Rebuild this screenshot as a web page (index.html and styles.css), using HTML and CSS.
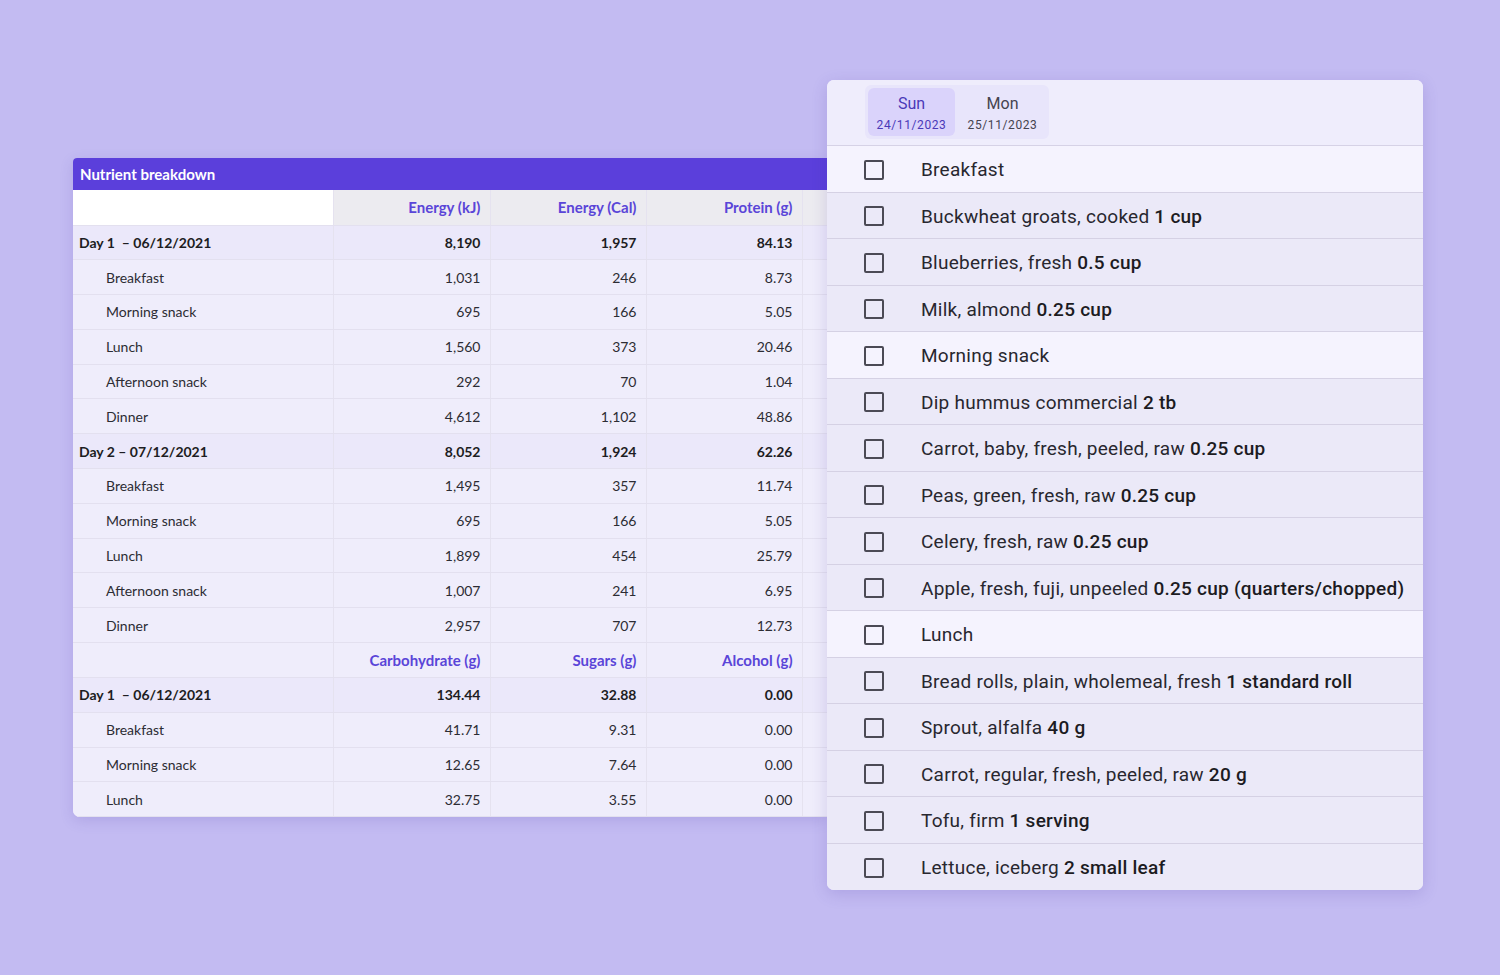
FILE: index.html
```html
<!DOCTYPE html>
<html lang="en">
<head>
    <meta charset="UTF-8">
    <meta name="viewport" content="width=device-width, initial-scale=1.0">
    <title>Nutrient breakdown</title>
    <link rel="stylesheet" href="styles.css">
</head>
<body>
    <div class="stage">
        <!-- nutrient table -->
        <div class="report">
            <div class="report-title">Nutrient breakdown</div>
            <table class="nutrients">
                <tr class="head">
                    <th class="blank"></th>
                    <th>Energy (kJ)</th>
                    <th>Energy (Cal)</th>
                    <th>Protein (g)</th>
                    <th class="rest"></th>
                </tr>
                <tr class="day"><td>Day 1 &nbsp;– 06/12/2021</td><td>8,190</td><td>1,957</td><td>84.13</td><td class="rest"></td></tr>
                <tr class="meal"><td>Breakfast</td><td>1,031</td><td>246</td><td>8.73</td><td class="rest"></td></tr>
                <tr class="meal"><td>Morning snack</td><td>695</td><td>166</td><td>5.05</td><td class="rest"></td></tr>
                <tr class="meal"><td>Lunch</td><td>1,560</td><td>373</td><td>20.46</td><td class="rest"></td></tr>
                <tr class="meal"><td>Afternoon snack</td><td>292</td><td>70</td><td>1.04</td><td class="rest"></td></tr>
                <tr class="meal"><td>Dinner</td><td>4,612</td><td>1,102</td><td>48.86</td><td class="rest"></td></tr>
                <tr class="day"><td>Day 2 – 07/12/2021</td><td>8,052</td><td>1,924</td><td>62.26</td><td class="rest"></td></tr>
                <tr class="meal"><td>Breakfast</td><td>1,495</td><td>357</td><td>11.74</td><td class="rest"></td></tr>
                <tr class="meal"><td>Morning snack</td><td>695</td><td>166</td><td>5.05</td><td class="rest"></td></tr>
                <tr class="meal"><td>Lunch</td><td>1,899</td><td>454</td><td>25.79</td><td class="rest"></td></tr>
                <tr class="meal"><td>Afternoon snack</td><td>1,007</td><td>241</td><td>6.95</td><td class="rest"></td></tr>
                <tr class="meal"><td>Dinner</td><td>2,957</td><td>707</td><td>12.73</td><td class="rest"></td></tr>
                <tr class="head second">
                    <th class="blank"></th>
                    <th>Carbohydrate (g)</th>
                    <th>Sugars (g)</th>
                    <th>Alcohol (g)</th>
                    <th class="rest"></th>
                </tr>
                <tr class="day"><td>Day 1 &nbsp;– 06/12/2021</td><td>134.44</td><td>32.88</td><td>0.00</td><td class="rest"></td></tr>
                <tr class="meal"><td>Breakfast</td><td>41.71</td><td>9.31</td><td>0.00</td><td class="rest"></td></tr>
                <tr class="meal"><td>Morning snack</td><td>12.65</td><td>7.64</td><td>0.00</td><td class="rest"></td></tr>
                <tr class="meal"><td>Lunch</td><td>32.75</td><td>3.55</td><td>0.00</td><td class="rest"></td></tr>
            </table>
        </div>

        <!-- shopping checklist -->
        <div class="planner">
            <div class="days">
                <div class="day-tabs">
                    <div class="tab active">
                        <span class="tab-name">Sun</span>
                        <span class="tab-date">24/11/2023</span>
                    </div>
                    <div class="tab">
                        <span class="tab-name">Mon</span>
                        <span class="tab-date">25/11/2023</span>
                    </div>
                </div>
            </div>
            <ul class="items">
                <li class="meal-row"><span class="box"></span>Breakfast</li>
                <li><span class="box"></span>Buckwheat groats, cooked&nbsp;<b>1 cup</b></li>
                <li><span class="box"></span>Blueberries, fresh&nbsp;<b>0.5 cup</b></li>
                <li><span class="box"></span>Milk, almond&nbsp;<b>0.25 cup</b></li>
                <li class="meal-row"><span class="box"></span>Morning snack</li>
                <li><span class="box"></span>Dip hummus commercial&nbsp;<b>2 tb</b></li>
                <li><span class="box"></span>Carrot, baby, fresh, peeled, raw&nbsp;<b>0.25 cup</b></li>
                <li><span class="box"></span>Peas, green, fresh, raw&nbsp;<b>0.25 cup</b></li>
                <li><span class="box"></span>Celery, fresh, raw&nbsp;<b>0.25 cup</b></li>
                <li><span class="box"></span>Apple, fresh, fuji, unpeeled&nbsp;<b>0.25 cup (quarters/chopped)</b></li>
                <li class="meal-row"><span class="box"></span>Lunch</li>
                <li><span class="box"></span>Bread rolls, plain, wholemeal, fresh&nbsp;<b>1 standard roll</b></li>
                <li><span class="box"></span>Sprout, alfalfa&nbsp;<b>40 g</b></li>
                <li><span class="box"></span>Carrot, regular, fresh, peeled, raw&nbsp;<b>20 g</b></li>
                <li><span class="box"></span>Tofu, firm&nbsp;<b>1 serving</b></li>
                <li class="last"><span class="box"></span>Lettuce, iceberg&nbsp;<b>2 small leaf</b></li>
            </ul>
        </div>
    </div>
</body>
</html>
```

FILE: styles.css
```css
body {
    margin: 0;
    padding: 0;
    background-color: #c3bbf2;
    font-family: Lato, "Noto Sans", sans-serif;
    color: #222;
    height: 975px;
    overflow: hidden;
}
.stage {
    display: flex;
    align-items: flex-start;
    padding: 80px 0 0 73px;
}

/* table card */
.report {
    width: 754px;
    margin-top: 78px;
    background: #efedfb;
    border-radius: 4px 0 0 7px;
    overflow: hidden;
    box-shadow: 0 4px 14px rgba(70, 50, 160, 0.15);
}
.report-title {
    height: 32px;
    line-height: 32px;
    padding-left: 7px;
    background-color: #5b3fdb;
    color: #fff;
    font-weight: bold;
    font-size: 15px;
}
.nutrients {
    width: 100%;
    border-collapse: collapse;
    table-layout: fixed;
    font-size: 14px;
}
.nutrients td,
.nutrients th {
    height: 34.8px;
    padding: 0 9px 0 6px;
    text-align: right;
    border-bottom: 1px solid #e3e0ef;
    border-right: 1px solid #e5e2ef;
    box-sizing: border-box;
    white-space: nowrap;
}
.nutrients td:first-child,
.nutrients th:first-child {
    width: 260px;
    text-align: left;
}
.nutrients td:nth-child(2), .nutrients th:nth-child(2) { width: 157px; }
.nutrients td:nth-child(3), .nutrients th:nth-child(3) { width: 156px; }
.nutrients td:nth-child(4), .nutrients th:nth-child(4) { width: 156px; }
.nutrients .rest {
    border-right: none;
    padding: 0;
}
.head th {
    background-color: #ecebf0;
    color: #5a45d8;
    font-size: 15px;
    font-weight: bold;
    height: 35px;
}
.head th.blank {
    background-color: #fff;
}
.head.second th,
.head.second th.blank {
    background-color: #efedfb;
}
.day td {
    font-weight: bold;
    color: #1d1d22;
    background-color: #ebe8fa;
}
.meal td {
    color: #2c2c33;
    background-color: #efedfb;
}
.meal td:first-child {
    padding-left: 33px;
}

/* planner card */
.planner {
    width: 596px;
    background: #f4f2fd;
    border-radius: 7px;
    overflow: hidden;
    box-shadow: 0 4px 16px rgba(70, 50, 160, 0.18);
    font-family: Roboto, "Noto Sans", sans-serif;
}
.days {
    height: 66px;
    box-sizing: border-box;
    padding: 5px 0 0 38px;
    background-color: #efedfc;
    border-bottom: 1px solid #d6d2e6;
}
.day-tabs {
    display: inline-flex;
    gap: 4px;
    padding: 3px;
    background-color: #e8e5fb;
    border-radius: 6px;
}
.tab {
    display: flex;
    flex-direction: column;
    align-items: center;
    width: 87px;
    height: 48px;
    box-sizing: border-box;
    padding-top: 6px;
    border-radius: 6px;
    color: #45434f;
}
.tab.active {
    background-color: #dad3fb;
    color: #4a39b8;
}
.tab-name {
    font-size: 16px;
    line-height: 20px;
}
.tab-date {
    font-size: 12px;
    letter-spacing: 0.6px;
    margin-top: 4px;
}
.items {
    list-style: none;
    margin: 0;
    padding: 0;
}
.items li {
    display: flex;
    align-items: center;
    height: 46.5px;
    box-sizing: border-box;
    padding-left: 37px;
    padding-top: 2px;
    border-bottom: 1px solid #d5d1e4;
    background-color: #ebe9f8;
    font-size: 19px;
    letter-spacing: 0.25px;
    color: #28272f;
    white-space: nowrap;
}
.items li.meal-row {
    background-color: #f5f3fe;
}
.items li.last {
    border-bottom: none;
}
.items b {
    font-weight: 500;
    color: #1c1b22;
}
.box {
    width: 20px;
    height: 20px;
    box-sizing: border-box;
    border: 2px solid #4b4a55;
    border-radius: 2px;
    margin-right: 37px;
    flex-shrink: 0;
}
```
